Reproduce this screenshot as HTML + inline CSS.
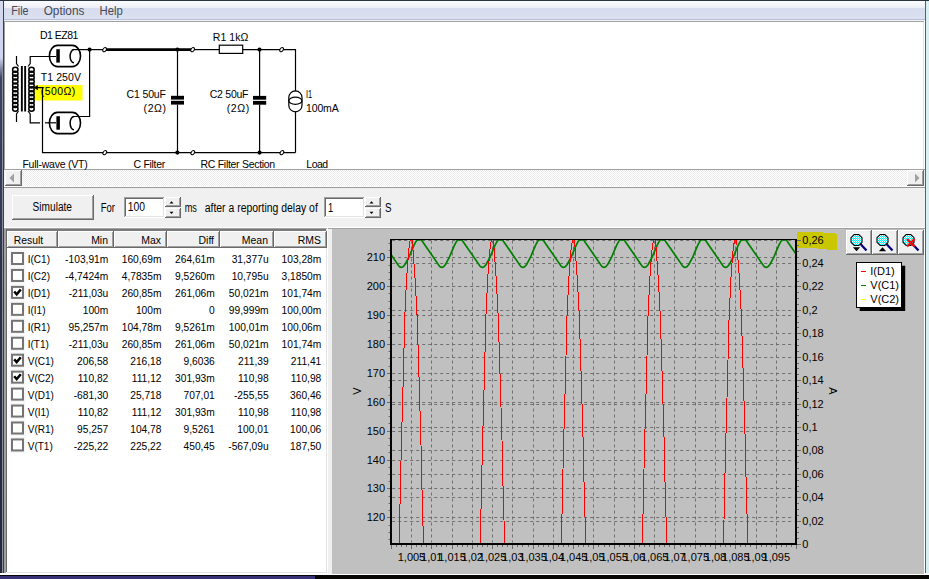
<!DOCTYPE html>
<html><head><meta charset="utf-8"><title>Rectifier Simulation</title>
<style>html,body{margin:0;padding:0;width:929px;height:579px;overflow:hidden;background:#f0f0f0}
svg text{font-family:"Liberation Sans",sans-serif}</style></head>
<body><svg width="929" height="579" viewBox="0 0 929 579" font-family="Liberation Sans, sans-serif" style="display:block"><rect x="0" y="0" width="929" height="579" fill="#f0f0f0" />
<defs><linearGradient id="lstrip" x1="0" y1="0" x2="0" y2="1"><stop offset="0" stop-color="#d6daf0"/><stop offset="0.10" stop-color="#cfd4ee"/><stop offset="0.135" stop-color="#3c4460"/><stop offset="0.5" stop-color="#2c3348"/><stop offset="1" stop-color="#252a3a"/></linearGradient><linearGradient id="menu" x1="0" y1="0" x2="0" y2="1"><stop offset="0" stop-color="#fbfcfe"/><stop offset="0.35" stop-color="#eef0f8"/><stop offset="0.4" stop-color="#d6dbee"/><stop offset="1" stop-color="#dde2f1"/></linearGradient><pattern id="dith" width="2" height="2" patternUnits="userSpaceOnUse"><rect width="2" height="2" fill="#ffffff"/><rect width="1" height="1" fill="#ebebeb"/><rect x="1" y="1" width="1" height="1" fill="#ebebeb"/></pattern><pattern id="cyan" width="2" height="2" patternUnits="userSpaceOnUse"><rect width="2" height="2" fill="#ffffff"/><rect width="1" height="1" fill="#00ffff"/><rect x="1" y="1" width="1" height="1" fill="#00ffff"/></pattern></defs>
<rect x="0" y="0" width="3" height="579" fill="url(#lstrip)" />
<rect x="2" y="70" width="1" height="509" fill="#8a8e9c" />
<rect x="3" y="0" width="1" height="579" fill="#3a3d44" />
<rect x="925" y="0" width="1" height="579" fill="#5a6068" />
<rect x="926" y="0" width="3" height="579" fill="#d8f0f4" />
<rect x="0" y="0" width="929" height="1" fill="#2a3340" />
<rect x="0" y="573" width="929" height="2" fill="#ffffff" />
<rect x="0" y="575" width="929" height="4" fill="#070605" />
<rect x="0" y="576" width="315" height="3" fill="#3a3278" />
<rect x="4" y="1" width="921" height="19" fill="url(#menu)" />
<rect x="4" y="19" width="921" height="1" fill="#b6bdd6" />
<rect x="4" y="20" width="921" height="1" fill="#f4f5fa" />
<text x="11.3" y="15" font-size="12" text-anchor="start" fill="#474a52" textLength="17.3" lengthAdjust="spacingAndGlyphs" >File</text>
<text x="43.7" y="15" font-size="12" text-anchor="start" fill="#474a52" textLength="40.7" lengthAdjust="spacingAndGlyphs" >Options</text>
<text x="99.5" y="15" font-size="12" text-anchor="start" fill="#474a52" textLength="23.3" lengthAdjust="spacingAndGlyphs" >Help</text>
<rect x="4" y="21" width="921" height="1" fill="#a0a0a0" />
<rect x="4" y="22" width="921" height="147" fill="#ffffff" />
<rect x="4" y="21" width="1" height="148" fill="#a0a0a0" />
<rect x="923" y="22" width="1" height="147" fill="#e3e3e3" />
<rect x="924" y="21" width="1" height="149" fill="#ffffff" />
<rect x="4" y="169" width="921" height="1" fill="#a0a0a0" />
<rect x="5" y="170" width="919" height="16" fill="url(#dith)" />
<rect x="5" y="170" width="17" height="16" fill="#696969" />
<rect x="5" y="170" width="16" height="15" fill="#ffffff" />
<rect x="6" y="171" width="15" height="14" fill="#a0a0a0" />
<rect x="6" y="171" width="14" height="13" fill="#f0f0f0" />
<path d="M9.5,178 L14,173.5 L14,182.5 Z" fill="#a0a0a0"/>
<rect x="907" y="170" width="17" height="16" fill="#696969" />
<rect x="907" y="170" width="16" height="15" fill="#ffffff" />
<rect x="908" y="171" width="15" height="14" fill="#a0a0a0" />
<rect x="908" y="171" width="14" height="13" fill="#f0f0f0" />
<path d="M919.5,178 L915,173.5 L915,182.5 Z" fill="#a0a0a0"/>
<rect x="4" y="186" width="921" height="1" fill="#ffffff" />
<rect x="4" y="187" width="921" height="1" fill="#9a9a9a" />
<rect x="33.5" y="85" width="49" height="15.5" fill="#ffff00" />
<g fill="none" stroke="#000" stroke-width="1.2">
<polyline points="16.5,56 16.5,63.5 18.5,66.5"/>
<polyline points="18.5,111 16.5,114 16.5,122"/>
<polyline points="28,66.5 30.2,63.5 30.2,56.5 56,56.5"/>
<polyline points="28,111 30.2,114 30.2,122.8 40,122.8"/>
<polyline points="45,122.8 56,122.8"/>
<ellipse cx="15.3" cy="69.8" rx="2.7" ry="2.5" stroke-width="1.5"/>
<ellipse cx="31.5" cy="69.8" rx="2.7" ry="2.5" stroke-width="1.5"/>
<ellipse cx="15.3" cy="73.7" rx="2.7" ry="2.5" stroke-width="1.5"/>
<ellipse cx="31.5" cy="73.7" rx="2.7" ry="2.5" stroke-width="1.5"/>
<ellipse cx="15.3" cy="77.6" rx="2.7" ry="2.5" stroke-width="1.5"/>
<ellipse cx="31.5" cy="77.6" rx="2.7" ry="2.5" stroke-width="1.5"/>
<ellipse cx="15.3" cy="81.5" rx="2.7" ry="2.5" stroke-width="1.5"/>
<ellipse cx="31.5" cy="81.5" rx="2.7" ry="2.5" stroke-width="1.5"/>
<ellipse cx="15.3" cy="85.39999999999999" rx="2.7" ry="2.5" stroke-width="1.5"/>
<ellipse cx="31.5" cy="85.39999999999999" rx="2.7" ry="2.5" stroke-width="1.5"/>
<ellipse cx="15.3" cy="89.3" rx="2.7" ry="2.5" stroke-width="1.5"/>
<ellipse cx="31.5" cy="89.3" rx="2.7" ry="2.5" stroke-width="1.5"/>
<ellipse cx="15.3" cy="93.19999999999999" rx="2.7" ry="2.5" stroke-width="1.5"/>
<ellipse cx="31.5" cy="93.19999999999999" rx="2.7" ry="2.5" stroke-width="1.5"/>
<ellipse cx="15.3" cy="97.1" rx="2.7" ry="2.5" stroke-width="1.5"/>
<ellipse cx="31.5" cy="97.1" rx="2.7" ry="2.5" stroke-width="1.5"/>
<ellipse cx="15.3" cy="101.0" rx="2.7" ry="2.5" stroke-width="1.5"/>
<ellipse cx="31.5" cy="101.0" rx="2.7" ry="2.5" stroke-width="1.5"/>
<ellipse cx="15.3" cy="104.9" rx="2.7" ry="2.5" stroke-width="1.5"/>
<ellipse cx="31.5" cy="104.9" rx="2.7" ry="2.5" stroke-width="1.5"/>
<ellipse cx="15.3" cy="108.8" rx="2.7" ry="2.5" stroke-width="1.5"/>
<ellipse cx="31.5" cy="108.8" rx="2.7" ry="2.5" stroke-width="1.5"/>
</g>
<rect x="20.9" y="66" width="1.9" height="45.5" fill="#000" />
<rect x="24.2" y="66" width="1.9" height="45.5" fill="#000" />
<g fill="none" stroke="#000" stroke-width="1.2">
<polyline points="37,87.6 42.5,87.6 42.5,152.6 295.5,152.6"/>
</g>
<path d="M33.6,87.6 L37.8,84.9 L37.8,90.3 Z" fill="#000"/>
<g fill="none" stroke="#000" stroke-width="1.6">
<path d="M57.5,45.4 L72.4,45.4 A8.1,10.6 0 0 1 72.4,66.6 L57.5,66.6 A8.1,10.6 0 0 1 57.5,45.4 Z"/>
<path d="M57.5,112.4 L72.4,112.4 A8.1,10.6 0 0 1 72.4,133.6 L57.5,133.6 A8.1,10.6 0 0 1 57.5,112.4 Z"/>
</g>
<rect x="56.3" y="49.2" width="3.5" height="13.4" fill="#000" />
<rect x="56.4" y="116.2" width="3.5" height="13.5" fill="#000" />
<g fill="none" stroke="#000" stroke-width="1.2">
<path d="M74,49.6 A3.9,6.6 0 0 0 74,62.8" stroke-width="1.5"/>
<path d="M74,116.5 A3.9,6.6 0 0 0 74,129.7" stroke-width="1.5"/>
<polyline points="73.3,49.6 104.5,49.6"/>
<polyline points="73.3,116.5 89.6,116.5 89.6,49.6"/>
<polyline points="192.6,49.6 219,49.6"/>
<polyline points="243,49.6 295.5,49.6 295.5,91.3"/>
<polyline points="295.5,111.5 295.5,152.6"/>
<polyline points="177.5,49.6 177.5,96"/>
<polyline points="177.5,104.6 177.5,152.6"/>
<polyline points="259.6,49.6 259.6,96"/>
<polyline points="259.6,104.6 259.6,152.6"/>
<rect x="219.3" y="45.2" width="23.4" height="8.2"/>
<path d="M288.8,97.5 A6.6,6.6 0 0 1 302,97.5 L302,105.2 A6.6,6.6 0 0 1 288.8,105.2 Z"/>
<ellipse cx="295.4" cy="100.8" rx="6.6" ry="3.6"/>
</g>
<line x1="104.5" y1="49.6" x2="192.6" y2="49.6" stroke="#000" stroke-width="2.6" />
<rect x="171" y="95.8" width="13" height="3.8" fill="#000" />
<rect x="171" y="100.8" width="13" height="3.8" fill="#000" />
<rect x="253" y="95.9" width="13.2" height="3.8" fill="#000" />
<rect x="253" y="100.9" width="13.2" height="3.8" fill="#000" />
<circle cx="89.6" cy="49.6" r="2.1" fill="#000"/>
<circle cx="177.4" cy="49.6" r="2.1" fill="#000"/>
<circle cx="259.5" cy="49.6" r="2.1" fill="#000"/>
<circle cx="177.4" cy="152.6" r="2.1" fill="#000"/>
<circle cx="259.6" cy="152.6" r="2.1" fill="#000"/>
<ellipse cx="104.6" cy="49.6" rx="1.6" ry="2.3" transform="rotate(35 104.6 49.6)" fill="#fff" stroke="#000" stroke-width="1"/>
<ellipse cx="104.8" cy="152.6" rx="1.6" ry="2.3" transform="rotate(35 104.8 152.6)" fill="#fff" stroke="#000" stroke-width="1"/>
<ellipse cx="192.6" cy="49.6" rx="1.6" ry="2.3" transform="rotate(35 192.6 49.6)" fill="#fff" stroke="#000" stroke-width="1"/>
<ellipse cx="192.8" cy="152.6" rx="1.6" ry="2.3" transform="rotate(35 192.8 152.6)" fill="#fff" stroke="#000" stroke-width="1"/>
<ellipse cx="281.6" cy="49.6" rx="1.6" ry="2.3" transform="rotate(35 281.6 49.6)" fill="#fff" stroke="#000" stroke-width="1"/>
<ellipse cx="281.9" cy="152.6" rx="1.6" ry="2.3" transform="rotate(35 281.9 152.6)" fill="#fff" stroke="#000" stroke-width="1"/>
<text x="39.9" y="39" font-size="10.5" text-anchor="start" fill="#000" textLength="38.5" lengthAdjust="spacing" >D1 EZ81</text>
<text x="40.8" y="81" font-size="10.5" text-anchor="start" fill="#000" textLength="40.1" lengthAdjust="spacing" >T1 250V</text>
<text x="40.8" y="95.3" font-size="10.5" text-anchor="start" fill="#000" textLength="34.5" lengthAdjust="spacing" >(500Ω)</text>
<text x="212.8" y="41.3" font-size="10.5" text-anchor="start" fill="#000" textLength="35.5" lengthAdjust="spacing" >R1 1kΩ</text>
<text x="126.6" y="98" font-size="10.5" text-anchor="start" fill="#000" textLength="39.3" lengthAdjust="spacing" >C1 50uF</text>
<text x="143.6" y="111.5" font-size="10.5" text-anchor="start" fill="#000" textLength="22.3" lengthAdjust="spacing" >(2Ω)</text>
<text x="209.7" y="98" font-size="10.5" text-anchor="start" fill="#000" textLength="38.8" lengthAdjust="spacing" >C2 50uF</text>
<text x="226.7" y="111.5" font-size="10.5" text-anchor="start" fill="#000" textLength="22.6" lengthAdjust="spacing" >(2Ω)</text>
<text x="306" y="97.6" font-size="10.5" text-anchor="start" fill="#000" textLength="6.2" lengthAdjust="spacingAndGlyphs" >I1</text>
<text x="306" y="112" font-size="10.5" text-anchor="start" fill="#000" textLength="32.7" lengthAdjust="spacing" >100mA</text>
<text x="22.4" y="168" font-size="10.5" text-anchor="start" fill="#000" textLength="65.4" lengthAdjust="spacing" >Full-wave (VT)</text>
<text x="133.5" y="168" font-size="10.5" text-anchor="start" fill="#000" textLength="31.7" lengthAdjust="spacing" >C Filter</text>
<text x="200.5" y="168" font-size="10.5" text-anchor="start" fill="#000" textLength="74.7" lengthAdjust="spacing" >RC Filter Section</text>
<text x="306.3" y="168" font-size="10.5" text-anchor="start" fill="#000" textLength="21.9" lengthAdjust="spacing" >Load</text>
<rect x="12" y="195" width="82" height="25" fill="#696969" />
<rect x="12" y="195" width="81" height="24" fill="#ffffff" />
<rect x="13" y="196" width="80" height="23" fill="#a0a0a0" />
<rect x="13" y="196" width="79" height="22" fill="#f0f0f0" />
<text x="32.6" y="211.1" font-size="12" text-anchor="start" fill="#000" textLength="39.4" lengthAdjust="spacingAndGlyphs" >Simulate</text>
<text x="100.7" y="211.7" font-size="12" text-anchor="start" fill="#000" textLength="14.2" lengthAdjust="spacingAndGlyphs" >For</text>
<rect x="124" y="197" width="41" height="21" fill="#ffffff" />
<rect x="124" y="197" width="40" height="20" fill="#a0a0a0" />
<rect x="125" y="198" width="39" height="19" fill="#e3e3e3" />
<rect x="125" y="198" width="38" height="18" fill="#696969" />
<rect x="126" y="199" width="37" height="17" fill="#ffffff" />
<text x="127.8" y="211.2" font-size="12" text-anchor="start" fill="#000" textLength="17.3" lengthAdjust="spacingAndGlyphs" >100</text>
<rect x="165" y="197" width="16" height="10" fill="#696969" />
<rect x="165" y="197" width="15" height="9" fill="#ffffff" />
<rect x="166" y="198" width="14" height="8" fill="#a0a0a0" />
<rect x="166" y="198" width="13" height="7" fill="#f0f0f0" />
<rect x="165" y="208" width="16" height="10" fill="#696969" />
<rect x="165" y="208" width="15" height="9" fill="#ffffff" />
<rect x="166" y="209" width="14" height="8" fill="#a0a0a0" />
<rect x="166" y="209" width="13" height="7" fill="#f0f0f0" />
<path d="M169.5,203.5 L173.5,203.5 L171.5,201.3 Z" fill="#000"/>
<path d="M169.5,211.8 L173.5,211.8 L171.5,214 Z" fill="#000"/>
<text x="184.7" y="211.7" font-size="12" text-anchor="start" fill="#000" textLength="12.2" lengthAdjust="spacingAndGlyphs" >ms</text>
<text x="204.7" y="211.7" font-size="12" text-anchor="start" fill="#000" textLength="113.1" lengthAdjust="spacingAndGlyphs" >after a reporting delay of</text>
<rect x="324" y="197" width="41" height="21" fill="#ffffff" />
<rect x="324" y="197" width="40" height="20" fill="#a0a0a0" />
<rect x="325" y="198" width="39" height="19" fill="#e3e3e3" />
<rect x="325" y="198" width="38" height="18" fill="#696969" />
<rect x="326" y="199" width="37" height="17" fill="#ffffff" />
<text x="328" y="211.7" font-size="12" text-anchor="start" fill="#000" textLength="5.2" lengthAdjust="spacingAndGlyphs" >1</text>
<rect x="365" y="197" width="16" height="10" fill="#696969" />
<rect x="365" y="197" width="15" height="9" fill="#ffffff" />
<rect x="366" y="198" width="14" height="8" fill="#a0a0a0" />
<rect x="366" y="198" width="13" height="7" fill="#f0f0f0" />
<rect x="365" y="208" width="16" height="10" fill="#696969" />
<rect x="365" y="208" width="15" height="9" fill="#ffffff" />
<rect x="366" y="209" width="14" height="8" fill="#a0a0a0" />
<rect x="366" y="209" width="13" height="7" fill="#f0f0f0" />
<path d="M369.5,203.5 L373.5,203.5 L371.5,201.3 Z" fill="#000"/>
<path d="M369.5,211.8 L373.5,211.8 L371.5,214 Z" fill="#000"/>
<text x="385" y="211.7" font-size="12" text-anchor="start" fill="#000" textLength="6.5" lengthAdjust="spacingAndGlyphs" >S</text>
<rect x="4" y="227" width="921" height="1" fill="#ffffff" />
<rect x="4" y="228" width="921" height="1" fill="#a0a0a0" />
<rect x="4" y="228" width="324" height="346" fill="#ffffff" />
<rect x="4" y="228" width="323" height="1" fill="#a0a0a0" />
<rect x="4" y="229" width="322" height="2" fill="#7a7a7a" />
<rect x="4" y="228" width="2" height="345" fill="#a0a0a0" />
<rect x="6" y="229" width="1" height="343" fill="#696969" />
<rect x="7" y="572" width="320" height="1" fill="#e3e3e3" />
<rect x="327" y="229" width="1" height="344" fill="#ffffff" />
<rect x="326" y="230" width="1" height="342" fill="#e3e3e3" />
<rect x="7" y="231" width="51" height="17" fill="#696969" />
<rect x="7" y="231" width="50" height="16" fill="#ffffff" />
<rect x="8" y="232" width="49" height="15" fill="#a0a0a0" />
<rect x="8" y="232" width="48" height="14" fill="#f0f0f0" />
<rect x="58" y="231" width="56" height="17" fill="#696969" />
<rect x="58" y="231" width="55" height="16" fill="#ffffff" />
<rect x="59" y="232" width="54" height="15" fill="#a0a0a0" />
<rect x="59" y="232" width="53" height="14" fill="#f0f0f0" />
<rect x="114" y="231" width="53" height="17" fill="#696969" />
<rect x="114" y="231" width="52" height="16" fill="#ffffff" />
<rect x="115" y="232" width="51" height="15" fill="#a0a0a0" />
<rect x="115" y="232" width="50" height="14" fill="#f0f0f0" />
<rect x="167" y="231" width="53" height="17" fill="#696969" />
<rect x="167" y="231" width="52" height="16" fill="#ffffff" />
<rect x="168" y="232" width="51" height="15" fill="#a0a0a0" />
<rect x="168" y="232" width="50" height="14" fill="#f0f0f0" />
<rect x="220" y="231" width="54" height="17" fill="#696969" />
<rect x="220" y="231" width="53" height="16" fill="#ffffff" />
<rect x="221" y="232" width="52" height="15" fill="#a0a0a0" />
<rect x="221" y="232" width="51" height="14" fill="#f0f0f0" />
<rect x="274" y="231" width="53" height="17" fill="#696969" />
<rect x="274" y="231" width="52" height="16" fill="#ffffff" />
<rect x="275" y="232" width="51" height="15" fill="#a0a0a0" />
<rect x="275" y="232" width="50" height="14" fill="#f0f0f0" />
<text x="13.8" y="243.9" font-size="11.5" text-anchor="start" fill="#000" textLength="29.4" lengthAdjust="spacingAndGlyphs" >Result</text>
<text transform="translate(108.00,243.90) scale(0.91,1)" x="0" y="0" font-size="11.5" text-anchor="end" fill="#000" >Min</text>
<text transform="translate(161.00,243.90) scale(0.91,1)" x="0" y="0" font-size="11.5" text-anchor="end" fill="#000" >Max</text>
<text transform="translate(214.00,243.90) scale(0.91,1)" x="0" y="0" font-size="11.5" text-anchor="end" fill="#000" >Diff</text>
<text transform="translate(268.00,243.90) scale(0.91,1)" x="0" y="0" font-size="11.5" text-anchor="end" fill="#000" >Mean</text>
<text transform="translate(321.00,243.90) scale(0.91,1)" x="0" y="0" font-size="11.5" text-anchor="end" fill="#000" >RMS</text>
<rect x="9.5" y="250.5" width="16" height="16" fill="#f5f5f5" />
<rect x="11" y="252.0" width="13" height="13" fill="#747474" />
<rect x="13" y="254.0" width="9" height="9" fill="#ffffff" />
<text transform="translate(27.70,263.20) scale(0.85,1)" x="0" y="0" font-size="11.8" text-anchor="start" fill="#000" >I(C1)</text>
<text transform="translate(108.30,263.20) scale(0.867,1)" x="0" y="0" font-size="11.8" text-anchor="end" fill="#000" >-103,91m</text>
<text transform="translate(161.50,263.20) scale(0.867,1)" x="0" y="0" font-size="11.8" text-anchor="end" fill="#000" >160,69m</text>
<text transform="translate(214.80,263.20) scale(0.867,1)" x="0" y="0" font-size="11.8" text-anchor="end" fill="#000" >264,61m</text>
<text transform="translate(268.60,263.20) scale(0.867,1)" x="0" y="0" font-size="11.8" text-anchor="end" fill="#000" >31,377u</text>
<text transform="translate(321.30,263.20) scale(0.867,1)" x="0" y="0" font-size="11.8" text-anchor="end" fill="#000" >103,28m</text>
<rect x="9.5" y="267.45" width="16" height="16" fill="#f5f5f5" />
<rect x="11" y="268.95" width="13" height="13" fill="#747474" />
<rect x="13" y="270.95" width="9" height="9" fill="#ffffff" />
<text transform="translate(27.70,280.15) scale(0.85,1)" x="0" y="0" font-size="11.8" text-anchor="start" fill="#000" >I(C2)</text>
<text transform="translate(108.30,280.15) scale(0.867,1)" x="0" y="0" font-size="11.8" text-anchor="end" fill="#000" >-4,7424m</text>
<text transform="translate(161.50,280.15) scale(0.867,1)" x="0" y="0" font-size="11.8" text-anchor="end" fill="#000" >4,7835m</text>
<text transform="translate(214.80,280.15) scale(0.867,1)" x="0" y="0" font-size="11.8" text-anchor="end" fill="#000" >9,5260m</text>
<text transform="translate(268.60,280.15) scale(0.867,1)" x="0" y="0" font-size="11.8" text-anchor="end" fill="#000" >10,795u</text>
<text transform="translate(321.30,280.15) scale(0.867,1)" x="0" y="0" font-size="11.8" text-anchor="end" fill="#000" >3,1850m</text>
<rect x="9.5" y="284.4" width="16" height="16" fill="#f5f5f5" />
<rect x="11" y="285.9" width="13" height="13" fill="#747474" />
<rect x="13" y="287.9" width="9" height="9" fill="#ffffff" />
<path d="M14.2,291.5 L16.7,294.29999999999995 L20.8,289.5" fill="none" stroke="#000" stroke-width="2.5"/>
<text transform="translate(27.70,297.10) scale(0.85,1)" x="0" y="0" font-size="11.8" text-anchor="start" fill="#000" >I(D1)</text>
<text transform="translate(108.30,297.10) scale(0.867,1)" x="0" y="0" font-size="11.8" text-anchor="end" fill="#000" >-211,03u</text>
<text transform="translate(161.50,297.10) scale(0.867,1)" x="0" y="0" font-size="11.8" text-anchor="end" fill="#000" >260,85m</text>
<text transform="translate(214.80,297.10) scale(0.867,1)" x="0" y="0" font-size="11.8" text-anchor="end" fill="#000" >261,06m</text>
<text transform="translate(268.60,297.10) scale(0.867,1)" x="0" y="0" font-size="11.8" text-anchor="end" fill="#000" >50,021m</text>
<text transform="translate(321.30,297.10) scale(0.867,1)" x="0" y="0" font-size="11.8" text-anchor="end" fill="#000" >101,74m</text>
<rect x="9.5" y="301.35" width="16" height="16" fill="#f5f5f5" />
<rect x="11" y="302.85" width="13" height="13" fill="#747474" />
<rect x="13" y="304.85" width="9" height="9" fill="#ffffff" />
<text transform="translate(27.70,314.05) scale(0.85,1)" x="0" y="0" font-size="11.8" text-anchor="start" fill="#000" >I(I1)</text>
<text transform="translate(108.30,314.05) scale(0.867,1)" x="0" y="0" font-size="11.8" text-anchor="end" fill="#000" >100m</text>
<text transform="translate(161.50,314.05) scale(0.867,1)" x="0" y="0" font-size="11.8" text-anchor="end" fill="#000" >100m</text>
<text transform="translate(214.80,314.05) scale(0.867,1)" x="0" y="0" font-size="11.8" text-anchor="end" fill="#000" >0</text>
<text transform="translate(268.60,314.05) scale(0.867,1)" x="0" y="0" font-size="11.8" text-anchor="end" fill="#000" >99,999m</text>
<text transform="translate(321.30,314.05) scale(0.867,1)" x="0" y="0" font-size="11.8" text-anchor="end" fill="#000" >100,00m</text>
<rect x="9.5" y="318.3" width="16" height="16" fill="#f5f5f5" />
<rect x="11" y="319.8" width="13" height="13" fill="#747474" />
<rect x="13" y="321.8" width="9" height="9" fill="#ffffff" />
<text transform="translate(27.70,331.00) scale(0.85,1)" x="0" y="0" font-size="11.8" text-anchor="start" fill="#000" >I(R1)</text>
<text transform="translate(108.30,331.00) scale(0.867,1)" x="0" y="0" font-size="11.8" text-anchor="end" fill="#000" >95,257m</text>
<text transform="translate(161.50,331.00) scale(0.867,1)" x="0" y="0" font-size="11.8" text-anchor="end" fill="#000" >104,78m</text>
<text transform="translate(214.80,331.00) scale(0.867,1)" x="0" y="0" font-size="11.8" text-anchor="end" fill="#000" >9,5261m</text>
<text transform="translate(268.60,331.00) scale(0.867,1)" x="0" y="0" font-size="11.8" text-anchor="end" fill="#000" >100,01m</text>
<text transform="translate(321.30,331.00) scale(0.867,1)" x="0" y="0" font-size="11.8" text-anchor="end" fill="#000" >100,06m</text>
<rect x="9.5" y="335.25" width="16" height="16" fill="#f5f5f5" />
<rect x="11" y="336.75" width="13" height="13" fill="#747474" />
<rect x="13" y="338.75" width="9" height="9" fill="#ffffff" />
<text transform="translate(27.70,347.95) scale(0.85,1)" x="0" y="0" font-size="11.8" text-anchor="start" fill="#000" >I(T1)</text>
<text transform="translate(108.30,347.95) scale(0.867,1)" x="0" y="0" font-size="11.8" text-anchor="end" fill="#000" >-211,03u</text>
<text transform="translate(161.50,347.95) scale(0.867,1)" x="0" y="0" font-size="11.8" text-anchor="end" fill="#000" >260,85m</text>
<text transform="translate(214.80,347.95) scale(0.867,1)" x="0" y="0" font-size="11.8" text-anchor="end" fill="#000" >261,06m</text>
<text transform="translate(268.60,347.95) scale(0.867,1)" x="0" y="0" font-size="11.8" text-anchor="end" fill="#000" >50,021m</text>
<text transform="translate(321.30,347.95) scale(0.867,1)" x="0" y="0" font-size="11.8" text-anchor="end" fill="#000" >101,74m</text>
<rect x="9.5" y="352.2" width="16" height="16" fill="#f5f5f5" />
<rect x="11" y="353.7" width="13" height="13" fill="#747474" />
<rect x="13" y="355.7" width="9" height="9" fill="#ffffff" />
<path d="M14.2,359.3 L16.7,362.09999999999997 L20.8,357.3" fill="none" stroke="#000" stroke-width="2.5"/>
<text transform="translate(27.70,364.90) scale(0.85,1)" x="0" y="0" font-size="11.8" text-anchor="start" fill="#000" >V(C1)</text>
<text transform="translate(108.30,364.90) scale(0.867,1)" x="0" y="0" font-size="11.8" text-anchor="end" fill="#000" >206,58</text>
<text transform="translate(161.50,364.90) scale(0.867,1)" x="0" y="0" font-size="11.8" text-anchor="end" fill="#000" >216,18</text>
<text transform="translate(214.80,364.90) scale(0.867,1)" x="0" y="0" font-size="11.8" text-anchor="end" fill="#000" >9,6036</text>
<text transform="translate(268.60,364.90) scale(0.867,1)" x="0" y="0" font-size="11.8" text-anchor="end" fill="#000" >211,39</text>
<text transform="translate(321.30,364.90) scale(0.867,1)" x="0" y="0" font-size="11.8" text-anchor="end" fill="#000" >211,41</text>
<rect x="9.5" y="369.15" width="16" height="16" fill="#f5f5f5" />
<rect x="11" y="370.65" width="13" height="13" fill="#747474" />
<rect x="13" y="372.65" width="9" height="9" fill="#ffffff" />
<path d="M14.2,376.25 L16.7,379.04999999999995 L20.8,374.25" fill="none" stroke="#000" stroke-width="2.5"/>
<text transform="translate(27.70,381.85) scale(0.85,1)" x="0" y="0" font-size="11.8" text-anchor="start" fill="#000" >V(C2)</text>
<text transform="translate(108.30,381.85) scale(0.867,1)" x="0" y="0" font-size="11.8" text-anchor="end" fill="#000" >110,82</text>
<text transform="translate(161.50,381.85) scale(0.867,1)" x="0" y="0" font-size="11.8" text-anchor="end" fill="#000" >111,12</text>
<text transform="translate(214.80,381.85) scale(0.867,1)" x="0" y="0" font-size="11.8" text-anchor="end" fill="#000" >301,93m</text>
<text transform="translate(268.60,381.85) scale(0.867,1)" x="0" y="0" font-size="11.8" text-anchor="end" fill="#000" >110,98</text>
<text transform="translate(321.30,381.85) scale(0.867,1)" x="0" y="0" font-size="11.8" text-anchor="end" fill="#000" >110,98</text>
<rect x="9.5" y="386.1" width="16" height="16" fill="#f5f5f5" />
<rect x="11" y="387.6" width="13" height="13" fill="#747474" />
<rect x="13" y="389.6" width="9" height="9" fill="#ffffff" />
<text transform="translate(27.70,398.80) scale(0.85,1)" x="0" y="0" font-size="11.8" text-anchor="start" fill="#000" >V(D1)</text>
<text transform="translate(108.30,398.80) scale(0.867,1)" x="0" y="0" font-size="11.8" text-anchor="end" fill="#000" >-681,30</text>
<text transform="translate(161.50,398.80) scale(0.867,1)" x="0" y="0" font-size="11.8" text-anchor="end" fill="#000" >25,718</text>
<text transform="translate(214.80,398.80) scale(0.867,1)" x="0" y="0" font-size="11.8" text-anchor="end" fill="#000" >707,01</text>
<text transform="translate(268.60,398.80) scale(0.867,1)" x="0" y="0" font-size="11.8" text-anchor="end" fill="#000" >-255,55</text>
<text transform="translate(321.30,398.80) scale(0.867,1)" x="0" y="0" font-size="11.8" text-anchor="end" fill="#000" >360,46</text>
<rect x="9.5" y="403.04999999999995" width="16" height="16" fill="#f5f5f5" />
<rect x="11" y="404.54999999999995" width="13" height="13" fill="#747474" />
<rect x="13" y="406.54999999999995" width="9" height="9" fill="#ffffff" />
<text transform="translate(27.70,415.75) scale(0.85,1)" x="0" y="0" font-size="11.8" text-anchor="start" fill="#000" >V(I1)</text>
<text transform="translate(108.30,415.75) scale(0.867,1)" x="0" y="0" font-size="11.8" text-anchor="end" fill="#000" >110,82</text>
<text transform="translate(161.50,415.75) scale(0.867,1)" x="0" y="0" font-size="11.8" text-anchor="end" fill="#000" >111,12</text>
<text transform="translate(214.80,415.75) scale(0.867,1)" x="0" y="0" font-size="11.8" text-anchor="end" fill="#000" >301,93m</text>
<text transform="translate(268.60,415.75) scale(0.867,1)" x="0" y="0" font-size="11.8" text-anchor="end" fill="#000" >110,98</text>
<text transform="translate(321.30,415.75) scale(0.867,1)" x="0" y="0" font-size="11.8" text-anchor="end" fill="#000" >110,98</text>
<rect x="9.5" y="420.0" width="16" height="16" fill="#f5f5f5" />
<rect x="11" y="421.5" width="13" height="13" fill="#747474" />
<rect x="13" y="423.5" width="9" height="9" fill="#ffffff" />
<text transform="translate(27.70,432.70) scale(0.85,1)" x="0" y="0" font-size="11.8" text-anchor="start" fill="#000" >V(R1)</text>
<text transform="translate(108.30,432.70) scale(0.867,1)" x="0" y="0" font-size="11.8" text-anchor="end" fill="#000" >95,257</text>
<text transform="translate(161.50,432.70) scale(0.867,1)" x="0" y="0" font-size="11.8" text-anchor="end" fill="#000" >104,78</text>
<text transform="translate(214.80,432.70) scale(0.867,1)" x="0" y="0" font-size="11.8" text-anchor="end" fill="#000" >9,5261</text>
<text transform="translate(268.60,432.70) scale(0.867,1)" x="0" y="0" font-size="11.8" text-anchor="end" fill="#000" >100,01</text>
<text transform="translate(321.30,432.70) scale(0.867,1)" x="0" y="0" font-size="11.8" text-anchor="end" fill="#000" >100,06</text>
<rect x="9.5" y="436.95" width="16" height="16" fill="#f5f5f5" />
<rect x="11" y="438.45" width="13" height="13" fill="#747474" />
<rect x="13" y="440.45" width="9" height="9" fill="#ffffff" />
<text transform="translate(27.70,449.65) scale(0.85,1)" x="0" y="0" font-size="11.8" text-anchor="start" fill="#000" >V(T1)</text>
<text transform="translate(108.30,449.65) scale(0.867,1)" x="0" y="0" font-size="11.8" text-anchor="end" fill="#000" >-225,22</text>
<text transform="translate(161.50,449.65) scale(0.867,1)" x="0" y="0" font-size="11.8" text-anchor="end" fill="#000" >225,22</text>
<text transform="translate(214.80,449.65) scale(0.867,1)" x="0" y="0" font-size="11.8" text-anchor="end" fill="#000" >450,45</text>
<text transform="translate(268.60,449.65) scale(0.867,1)" x="0" y="0" font-size="11.8" text-anchor="end" fill="#000" >-567,09u</text>
<text transform="translate(321.30,449.65) scale(0.867,1)" x="0" y="0" font-size="11.8" text-anchor="end" fill="#000" >187,50</text>
<rect x="328" y="229" width="4" height="345" fill="#f0f0f0" />
<rect x="332" y="229" width="593" height="345" fill="#c0c0c0" />
<rect x="924" y="229" width="1" height="345" fill="#ffffff" />
<polygon points="797,232 823,232 823,233 835,233 835,234 837,234 837,250 827,250 827,249 817,249 817,248 797,248" fill="#cac600"/>
<g stroke="#707070" stroke-width="1" stroke-dasharray="3,3">
<line x1="411.5" y1="240.5" x2="411.5" y2="542.5"/>
<line x1="431.5" y1="240.5" x2="431.5" y2="542.5"/>
<line x1="452.5" y1="240.5" x2="452.5" y2="542.5"/>
<line x1="472.5" y1="240.5" x2="472.5" y2="542.5"/>
<line x1="492.5" y1="240.5" x2="492.5" y2="542.5"/>
<line x1="512.5" y1="240.5" x2="512.5" y2="542.5"/>
<line x1="533.5" y1="240.5" x2="533.5" y2="542.5"/>
<line x1="553.5" y1="240.5" x2="553.5" y2="542.5"/>
<line x1="573.5" y1="240.5" x2="573.5" y2="542.5"/>
<line x1="593.5" y1="240.5" x2="593.5" y2="542.5"/>
<line x1="614.5" y1="240.5" x2="614.5" y2="542.5"/>
<line x1="634.5" y1="240.5" x2="634.5" y2="542.5"/>
<line x1="654.5" y1="240.5" x2="654.5" y2="542.5"/>
<line x1="674.5" y1="240.5" x2="674.5" y2="542.5"/>
<line x1="695.5" y1="240.5" x2="695.5" y2="542.5"/>
<line x1="715.5" y1="240.5" x2="715.5" y2="542.5"/>
<line x1="735.5" y1="240.5" x2="735.5" y2="542.5"/>
<line x1="756.5" y1="240.5" x2="756.5" y2="542.5"/>
<line x1="776.5" y1="240.5" x2="776.5" y2="542.5"/>
<line x1="392.2" y1="517.5" x2="794.5" y2="517.5"/>
<line x1="392.2" y1="488.5" x2="794.5" y2="488.5"/>
<line x1="392.2" y1="460.5" x2="794.5" y2="460.5"/>
<line x1="392.2" y1="431.5" x2="794.5" y2="431.5"/>
<line x1="392.2" y1="402.5" x2="794.5" y2="402.5"/>
<line x1="392.2" y1="373.5" x2="794.5" y2="373.5"/>
<line x1="392.2" y1="344.5" x2="794.5" y2="344.5"/>
<line x1="392.2" y1="315.5" x2="794.5" y2="315.5"/>
<line x1="392.2" y1="286.5" x2="794.5" y2="286.5"/>
<line x1="392.2" y1="257.5" x2="794.5" y2="257.5"/>
<line x1="392.2" y1="521.5" x2="794.5" y2="521.5"/>
<line x1="392.2" y1="497.5" x2="794.5" y2="497.5"/>
<line x1="392.2" y1="474.5" x2="794.5" y2="474.5"/>
<line x1="392.2" y1="450.5" x2="794.5" y2="450.5"/>
<line x1="392.2" y1="427.5" x2="794.5" y2="427.5"/>
<line x1="392.2" y1="404.5" x2="794.5" y2="404.5"/>
<line x1="392.2" y1="380.5" x2="794.5" y2="380.5"/>
<line x1="392.2" y1="357.5" x2="794.5" y2="357.5"/>
<line x1="392.2" y1="333.5" x2="794.5" y2="333.5"/>
<line x1="392.2" y1="310.5" x2="794.5" y2="310.5"/>
<line x1="392.2" y1="286.5" x2="794.5" y2="286.5"/>
<line x1="392.2" y1="263.5" x2="794.5" y2="263.5"/>
<line x1="392.2" y1="240.5" x2="794.5" y2="240.5"/>
</g>
<g stroke="#6a6a6a" stroke-width="1">
<line x1="387" y1="517.5" x2="390" y2="517.5"/>
<line x1="387" y1="488.5" x2="390" y2="488.5"/>
<line x1="387" y1="460.5" x2="390" y2="460.5"/>
<line x1="387" y1="431.5" x2="390" y2="431.5"/>
<line x1="387" y1="402.5" x2="390" y2="402.5"/>
<line x1="387" y1="373.5" x2="390" y2="373.5"/>
<line x1="387" y1="344.5" x2="390" y2="344.5"/>
<line x1="387" y1="315.5" x2="390" y2="315.5"/>
<line x1="387" y1="286.5" x2="390" y2="286.5"/>
<line x1="387" y1="257.5" x2="390" y2="257.5"/>
<line x1="388.5" y1="539.5" x2="390" y2="539.5"/>
<line x1="388.5" y1="532.5" x2="390" y2="532.5"/>
<line x1="388.5" y1="525.5" x2="390" y2="525.5"/>
<line x1="388.5" y1="510.5" x2="390" y2="510.5"/>
<line x1="388.5" y1="503.5" x2="390" y2="503.5"/>
<line x1="388.5" y1="496.5" x2="390" y2="496.5"/>
<line x1="388.5" y1="481.5" x2="390" y2="481.5"/>
<line x1="388.5" y1="474.5" x2="390" y2="474.5"/>
<line x1="388.5" y1="467.5" x2="390" y2="467.5"/>
<line x1="388.5" y1="452.5" x2="390" y2="452.5"/>
<line x1="388.5" y1="445.5" x2="390" y2="445.5"/>
<line x1="388.5" y1="438.5" x2="390" y2="438.5"/>
<line x1="388.5" y1="423.5" x2="390" y2="423.5"/>
<line x1="388.5" y1="416.5" x2="390" y2="416.5"/>
<line x1="388.5" y1="409.5" x2="390" y2="409.5"/>
<line x1="388.5" y1="395.5" x2="390" y2="395.5"/>
<line x1="388.5" y1="387.5" x2="390" y2="387.5"/>
<line x1="388.5" y1="380.5" x2="390" y2="380.5"/>
<line x1="388.5" y1="366.5" x2="390" y2="366.5"/>
<line x1="388.5" y1="358.5" x2="390" y2="358.5"/>
<line x1="388.5" y1="351.5" x2="390" y2="351.5"/>
<line x1="388.5" y1="337.5" x2="390" y2="337.5"/>
<line x1="388.5" y1="330.5" x2="390" y2="330.5"/>
<line x1="388.5" y1="322.5" x2="390" y2="322.5"/>
<line x1="388.5" y1="308.5" x2="390" y2="308.5"/>
<line x1="388.5" y1="301.5" x2="390" y2="301.5"/>
<line x1="388.5" y1="293.5" x2="390" y2="293.5"/>
<line x1="388.5" y1="279.5" x2="390" y2="279.5"/>
<line x1="388.5" y1="272.5" x2="390" y2="272.5"/>
<line x1="388.5" y1="265.5" x2="390" y2="265.5"/>
<line x1="388.5" y1="250.5" x2="390" y2="250.5"/>
<line x1="388.5" y1="243.5" x2="390" y2="243.5"/>
<line x1="797" y1="544.5" x2="801" y2="544.5"/>
<line x1="797" y1="521.5" x2="801" y2="521.5"/>
<line x1="797" y1="497.5" x2="801" y2="497.5"/>
<line x1="797" y1="474.5" x2="801" y2="474.5"/>
<line x1="797" y1="450.5" x2="801" y2="450.5"/>
<line x1="797" y1="427.5" x2="801" y2="427.5"/>
<line x1="797" y1="404.5" x2="801" y2="404.5"/>
<line x1="797" y1="380.5" x2="801" y2="380.5"/>
<line x1="797" y1="357.5" x2="801" y2="357.5"/>
<line x1="797" y1="333.5" x2="801" y2="333.5"/>
<line x1="797" y1="310.5" x2="801" y2="310.5"/>
<line x1="797" y1="286.5" x2="801" y2="286.5"/>
<line x1="797" y1="263.5" x2="801" y2="263.5"/>
<line x1="797" y1="240.5" x2="801" y2="240.5"/>
<line x1="797" y1="538.5" x2="799" y2="538.5"/>
<line x1="797" y1="532.5" x2="799" y2="532.5"/>
<line x1="797" y1="527.5" x2="799" y2="527.5"/>
<line x1="797" y1="515.5" x2="799" y2="515.5"/>
<line x1="797" y1="509.5" x2="799" y2="509.5"/>
<line x1="797" y1="503.5" x2="799" y2="503.5"/>
<line x1="797" y1="491.5" x2="799" y2="491.5"/>
<line x1="797" y1="486.5" x2="799" y2="486.5"/>
<line x1="797" y1="480.5" x2="799" y2="480.5"/>
<line x1="797" y1="468.5" x2="799" y2="468.5"/>
<line x1="797" y1="462.5" x2="799" y2="462.5"/>
<line x1="797" y1="456.5" x2="799" y2="456.5"/>
<line x1="797" y1="445.5" x2="799" y2="445.5"/>
<line x1="797" y1="439.5" x2="799" y2="439.5"/>
<line x1="797" y1="433.5" x2="799" y2="433.5"/>
<line x1="797" y1="421.5" x2="799" y2="421.5"/>
<line x1="797" y1="415.5" x2="799" y2="415.5"/>
<line x1="797" y1="409.5" x2="799" y2="409.5"/>
<line x1="797" y1="398.5" x2="799" y2="398.5"/>
<line x1="797" y1="392.5" x2="799" y2="392.5"/>
<line x1="797" y1="386.5" x2="799" y2="386.5"/>
<line x1="797" y1="374.5" x2="799" y2="374.5"/>
<line x1="797" y1="368.5" x2="799" y2="368.5"/>
<line x1="797" y1="363.5" x2="799" y2="363.5"/>
<line x1="797" y1="351.5" x2="799" y2="351.5"/>
<line x1="797" y1="345.5" x2="799" y2="345.5"/>
<line x1="797" y1="339.5" x2="799" y2="339.5"/>
<line x1="797" y1="327.5" x2="799" y2="327.5"/>
<line x1="797" y1="322.5" x2="799" y2="322.5"/>
<line x1="797" y1="316.5" x2="799" y2="316.5"/>
<line x1="797" y1="304.5" x2="799" y2="304.5"/>
<line x1="797" y1="298.5" x2="799" y2="298.5"/>
<line x1="797" y1="292.5" x2="799" y2="292.5"/>
<line x1="797" y1="281.5" x2="799" y2="281.5"/>
<line x1="797" y1="275.5" x2="799" y2="275.5"/>
<line x1="797" y1="269.5" x2="799" y2="269.5"/>
<line x1="797" y1="257.5" x2="799" y2="257.5"/>
<line x1="797" y1="251.5" x2="799" y2="251.5"/>
<line x1="797" y1="245.5" x2="799" y2="245.5"/>
<line x1="391.5" y1="545" x2="391.5" y2="549"/>
<line x1="411.5" y1="545" x2="411.5" y2="549"/>
<line x1="431.5" y1="545" x2="431.5" y2="549"/>
<line x1="452.5" y1="545" x2="452.5" y2="549"/>
<line x1="472.5" y1="545" x2="472.5" y2="549"/>
<line x1="492.5" y1="545" x2="492.5" y2="549"/>
<line x1="512.5" y1="545" x2="512.5" y2="549"/>
<line x1="533.5" y1="545" x2="533.5" y2="549"/>
<line x1="553.5" y1="545" x2="553.5" y2="549"/>
<line x1="573.5" y1="545" x2="573.5" y2="549"/>
<line x1="593.5" y1="545" x2="593.5" y2="549"/>
<line x1="614.5" y1="545" x2="614.5" y2="549"/>
<line x1="634.5" y1="545" x2="634.5" y2="549"/>
<line x1="654.5" y1="545" x2="654.5" y2="549"/>
<line x1="674.5" y1="545" x2="674.5" y2="549"/>
<line x1="695.5" y1="545" x2="695.5" y2="549"/>
<line x1="715.5" y1="545" x2="715.5" y2="549"/>
<line x1="735.5" y1="545" x2="735.5" y2="549"/>
<line x1="756.5" y1="545" x2="756.5" y2="549"/>
<line x1="776.5" y1="545" x2="776.5" y2="549"/>
<line x1="796.5" y1="545" x2="796.5" y2="549"/>
<line x1="396.5" y1="545" x2="396.5" y2="547"/>
<line x1="401.5" y1="545" x2="401.5" y2="547"/>
<line x1="406.5" y1="545" x2="406.5" y2="547"/>
<line x1="416.5" y1="545" x2="416.5" y2="547"/>
<line x1="421.5" y1="545" x2="421.5" y2="547"/>
<line x1="426.5" y1="545" x2="426.5" y2="547"/>
<line x1="436.5" y1="545" x2="436.5" y2="547"/>
<line x1="441.5" y1="545" x2="441.5" y2="547"/>
<line x1="446.5" y1="545" x2="446.5" y2="547"/>
<line x1="457.5" y1="545" x2="457.5" y2="547"/>
<line x1="462.5" y1="545" x2="462.5" y2="547"/>
<line x1="467.5" y1="545" x2="467.5" y2="547"/>
<line x1="477.5" y1="545" x2="477.5" y2="547"/>
<line x1="482.5" y1="545" x2="482.5" y2="547"/>
<line x1="487.5" y1="545" x2="487.5" y2="547"/>
<line x1="497.5" y1="545" x2="497.5" y2="547"/>
<line x1="502.5" y1="545" x2="502.5" y2="547"/>
<line x1="507.5" y1="545" x2="507.5" y2="547"/>
<line x1="517.5" y1="545" x2="517.5" y2="547"/>
<line x1="522.5" y1="545" x2="522.5" y2="547"/>
<line x1="528.5" y1="545" x2="528.5" y2="547"/>
<line x1="538.5" y1="545" x2="538.5" y2="547"/>
<line x1="543.5" y1="545" x2="543.5" y2="547"/>
<line x1="548.5" y1="545" x2="548.5" y2="547"/>
<line x1="558.5" y1="545" x2="558.5" y2="547"/>
<line x1="563.5" y1="545" x2="563.5" y2="547"/>
<line x1="568.5" y1="545" x2="568.5" y2="547"/>
<line x1="578.5" y1="545" x2="578.5" y2="547"/>
<line x1="583.5" y1="545" x2="583.5" y2="547"/>
<line x1="588.5" y1="545" x2="588.5" y2="547"/>
<line x1="598.5" y1="545" x2="598.5" y2="547"/>
<line x1="604.5" y1="545" x2="604.5" y2="547"/>
<line x1="609.5" y1="545" x2="609.5" y2="547"/>
<line x1="619.5" y1="545" x2="619.5" y2="547"/>
<line x1="624.5" y1="545" x2="624.5" y2="547"/>
<line x1="629.5" y1="545" x2="629.5" y2="547"/>
<line x1="639.5" y1="545" x2="639.5" y2="547"/>
<line x1="644.5" y1="545" x2="644.5" y2="547"/>
<line x1="649.5" y1="545" x2="649.5" y2="547"/>
<line x1="659.5" y1="545" x2="659.5" y2="547"/>
<line x1="664.5" y1="545" x2="664.5" y2="547"/>
<line x1="669.5" y1="545" x2="669.5" y2="547"/>
<line x1="680.5" y1="545" x2="680.5" y2="547"/>
<line x1="685.5" y1="545" x2="685.5" y2="547"/>
<line x1="690.5" y1="545" x2="690.5" y2="547"/>
<line x1="700.5" y1="545" x2="700.5" y2="547"/>
<line x1="705.5" y1="545" x2="705.5" y2="547"/>
<line x1="710.5" y1="545" x2="710.5" y2="547"/>
<line x1="720.5" y1="545" x2="720.5" y2="547"/>
<line x1="725.5" y1="545" x2="725.5" y2="547"/>
<line x1="730.5" y1="545" x2="730.5" y2="547"/>
<line x1="740.5" y1="545" x2="740.5" y2="547"/>
<line x1="745.5" y1="545" x2="745.5" y2="547"/>
<line x1="750.5" y1="545" x2="750.5" y2="547"/>
<line x1="761.5" y1="545" x2="761.5" y2="547"/>
<line x1="766.5" y1="545" x2="766.5" y2="547"/>
<line x1="771.5" y1="545" x2="771.5" y2="547"/>
<line x1="781.5" y1="545" x2="781.5" y2="547"/>
<line x1="786.5" y1="545" x2="786.5" y2="547"/>
<line x1="791.5" y1="545" x2="791.5" y2="547"/>
</g>
<defs><clipPath id="plot"><rect x="392" y="240" width="403" height="303"/></clipPath></defs>
<g clip-path="url(#plot)">
<polyline fill="none" stroke="#008000" stroke-width="1.7" points="361.0,267.3 362.5,266.8 364.5,264.5 368.3,257.5 370.5,252.2 373.5,245.2 375.5,241.4 376.6,240.0 380.8,240.0 382.0,241.4 399.1,266.4 400.4,267.1 401.5,267.3 403.0,266.8 405.0,264.5 408.8,257.5 411.0,252.2 414.0,245.2 416.0,241.4 417.1,240.0 421.3,240.0 422.5,241.4 439.6,266.4 440.9,267.1 442.0,267.3 443.5,266.8 445.5,264.5 449.3,257.5 451.5,252.2 454.5,245.2 456.5,241.4 457.6,240.0 461.8,240.0 463.0,241.4 480.2,266.4 481.5,267.1 482.6,267.3 484.1,266.8 486.1,264.5 489.9,257.5 492.1,252.2 495.1,245.2 497.1,241.4 498.2,240.0 502.4,240.0 503.6,241.4 520.7,266.4 522.0,267.1 523.1,267.3 524.6,266.8 526.6,264.5 530.4,257.5 532.6,252.2 535.6,245.2 537.6,241.4 538.7,240.0 542.9,240.0 544.1,241.4 561.3,266.4 562.6,267.1 563.7,267.3 565.2,266.8 567.2,264.5 571.0,257.5 573.2,252.2 576.2,245.2 578.2,241.4 579.3,240.0 583.5,240.0 584.7,241.4 601.8,266.4 603.1,267.1 604.2,267.3 605.7,266.8 607.7,264.5 611.5,257.5 613.7,252.2 616.7,245.2 618.7,241.4 619.8,240.0 624.0,240.0 625.2,241.4 642.3,266.4 643.6,267.1 644.7,267.3 646.2,266.8 648.2,264.5 652.0,257.5 654.2,252.2 657.2,245.2 659.2,241.4 660.3,240.0 664.5,240.0 665.7,241.4 682.9,266.4 684.2,267.1 685.3,267.3 686.8,266.8 688.8,264.5 692.6,257.5 694.8,252.2 697.8,245.2 699.8,241.4 700.9,240.0 705.1,240.0 706.3,241.4 723.4,266.4 724.7,267.1 725.8,267.3 727.3,266.8 729.3,264.5 733.1,257.5 735.3,252.2 738.3,245.2 740.3,241.4 741.4,240.0 745.6,240.0 746.8,241.4 764.0,266.4 765.3,267.1 766.4,267.3 767.9,266.8 769.9,264.5 773.7,257.5 775.9,252.2 778.9,245.2 780.9,241.4 782.0,240.0 786.2,240.0 787.4,241.4 804.5,266.4 805.8,267.1 806.9,267.3 808.4,266.8 810.4,264.5 814.2,257.5 816.4,252.2 819.4,245.2 821.4,241.4 822.5,240.0 826.7,240.0 827.9,241.4 845.0,266.4 846.3,267.1"/>
<polyline fill="none" stroke="#ff0000" stroke-width="1" shape-rendering="crispEdges" points="318.2,543.5 318.6,520.0 319.2,490.0 320.4,440.0 322.1,380.0 323.7,316.0 324.4,303.7 325.2,283.0 326.6,263.6 327.7,249.8 329.4,238.0 331.2,238.0 331.9,249.8 332.9,263.6 334.3,283.0 335.3,303.7 336.0,316.0 338.0,380.0 339.8,440.0 340.9,490.0 341.8,520.0 342.3,543.5"/>
<polyline fill="none" stroke="#ff0000" stroke-width="1" shape-rendering="crispEdges" points="399.3,543.5 399.7,520.0 400.3,490.0 401.5,440.0 403.2,380.0 404.8,316.0 405.5,303.7 406.3,283.0 407.7,263.6 408.8,249.8 410.5,238.0 412.3,238.0 413.0,249.8 414.0,263.6 415.4,283.0 416.4,303.7 417.1,316.0 419.1,380.0 420.9,440.0 422.0,490.0 422.9,520.0 423.4,543.5"/>
<polyline fill="none" stroke="#ff0000" stroke-width="1" shape-rendering="crispEdges" points="480.4,543.5 480.8,520.0 481.4,490.0 482.6,440.0 484.3,380.0 485.9,316.0 486.6,303.7 487.4,283.0 488.8,263.6 489.9,249.8 491.6,238.0 493.4,238.0 494.1,249.8 495.1,263.6 496.5,283.0 497.5,303.7 498.2,316.0 500.2,380.0 502.0,440.0 503.1,490.0 504.0,520.0 504.5,543.5"/>
<polyline fill="none" stroke="#ff0000" stroke-width="1" shape-rendering="crispEdges" points="561.5,543.5 561.9,520.0 562.5,490.0 563.7,440.0 565.4,380.0 567.0,316.0 567.7,303.7 568.5,283.0 569.9,263.6 571.0,249.8 572.7,238.0 574.5,238.0 575.2,249.8 576.2,263.6 577.6,283.0 578.6,303.7 579.3,316.0 581.3,380.0 583.1,440.0 584.2,490.0 585.1,520.0 585.6,543.5"/>
<polyline fill="none" stroke="#ff0000" stroke-width="1" shape-rendering="crispEdges" points="642.5,543.5 642.9,520.0 643.5,490.0 644.7,440.0 646.4,380.0 648.0,316.0 648.7,303.7 649.5,283.0 650.9,263.6 652.0,249.8 653.7,238.0 655.5,238.0 656.2,249.8 657.2,263.6 658.6,283.0 659.6,303.7 660.3,316.0 662.3,380.0 664.1,440.0 665.2,490.0 666.1,520.0 666.6,543.5"/>
<polyline fill="none" stroke="#ff0000" stroke-width="1" shape-rendering="crispEdges" points="723.6,543.5 724.0,520.0 724.6,490.0 725.8,440.0 727.5,380.0 729.1,316.0 729.8,303.7 730.6,283.0 732.0,263.6 733.1,249.8 734.8,238.0 736.6,238.0 737.3,249.8 738.3,263.6 739.7,283.0 740.7,303.7 741.4,316.0 743.4,380.0 745.2,440.0 746.3,490.0 747.2,520.0 747.7,543.5"/>
</g>
<rect x="390" y="239" width="406" height="1" fill="#000" />
<rect x="390" y="239" width="2" height="306" fill="#000" />
<rect x="795" y="239" width="2" height="306" fill="#000" />
<rect x="390" y="543" width="407" height="2" fill="#000" />
<text x="385" y="521.2" font-size="11" text-anchor="end" fill="#000" >120</text>
<text x="385" y="492.2" font-size="11" text-anchor="end" fill="#000" >130</text>
<text x="385" y="464.2" font-size="11" text-anchor="end" fill="#000" >140</text>
<text x="385" y="435.2" font-size="11" text-anchor="end" fill="#000" >150</text>
<text x="385" y="406.2" font-size="11" text-anchor="end" fill="#000" >160</text>
<text x="385" y="377.2" font-size="11" text-anchor="end" fill="#000" >170</text>
<text x="385" y="348.2" font-size="11" text-anchor="end" fill="#000" >180</text>
<text x="385" y="319.2" font-size="11" text-anchor="end" fill="#000" >190</text>
<text x="385" y="290.2" font-size="11" text-anchor="end" fill="#000" >200</text>
<text x="385" y="261.2" font-size="11" text-anchor="end" fill="#000" >210</text>
<text x="802.3" y="548.2" font-size="11" text-anchor="start" fill="#000" >0</text>
<text x="802.3" y="525.2" font-size="11" text-anchor="start" fill="#000" >0,02</text>
<text x="802.3" y="501.2" font-size="11" text-anchor="start" fill="#000" >0,04</text>
<text x="802.3" y="478.2" font-size="11" text-anchor="start" fill="#000" >0,06</text>
<text x="802.3" y="454.2" font-size="11" text-anchor="start" fill="#000" >0,08</text>
<text x="802.3" y="431.2" font-size="11" text-anchor="start" fill="#000" >0,1</text>
<text x="802.3" y="408.2" font-size="11" text-anchor="start" fill="#000" >0,12</text>
<text x="802.3" y="384.2" font-size="11" text-anchor="start" fill="#000" >0,14</text>
<text x="802.3" y="361.2" font-size="11" text-anchor="start" fill="#000" >0,16</text>
<text x="802.3" y="337.2" font-size="11" text-anchor="start" fill="#000" >0,18</text>
<text x="802.3" y="314.2" font-size="11" text-anchor="start" fill="#000" >0,2</text>
<text x="802.3" y="290.2" font-size="11" text-anchor="start" fill="#000" >0,22</text>
<text x="802.3" y="267.2" font-size="11" text-anchor="start" fill="#000" >0,24</text>
<text x="802.3" y="244.2" font-size="11" text-anchor="start" fill="#000" >0,26</text>
<text x="357" y="391" font-size="11" text-anchor="middle" fill="#000" transform="rotate(-90 357 391)" dominant-baseline="central">V</text>
<text x="833" y="391" font-size="11" text-anchor="middle" fill="#000" transform="rotate(90 833 391)" dominant-baseline="central">A</text>
<text x="411.46999999999997" y="560.6" font-size="11" text-anchor="middle" fill="#000" >1,005</text>
<text x="431.74" y="560.6" font-size="11" text-anchor="middle" fill="#000" >1,01</text>
<text x="452.01" y="560.6" font-size="11" text-anchor="middle" fill="#000" >1,015</text>
<text x="472.28" y="560.6" font-size="11" text-anchor="middle" fill="#000" >1,02</text>
<text x="492.54999999999995" y="560.6" font-size="11" text-anchor="middle" fill="#000" >1,025</text>
<text x="512.8199999999999" y="560.6" font-size="11" text-anchor="middle" fill="#000" >1,03</text>
<text x="533.0899999999999" y="560.6" font-size="11" text-anchor="middle" fill="#000" >1,035</text>
<text x="553.36" y="560.6" font-size="11" text-anchor="middle" fill="#000" >1,04</text>
<text x="573.63" y="560.6" font-size="11" text-anchor="middle" fill="#000" >1,045</text>
<text x="593.9" y="560.6" font-size="11" text-anchor="middle" fill="#000" >1,05</text>
<text x="614.17" y="560.6" font-size="11" text-anchor="middle" fill="#000" >1,055</text>
<text x="634.44" y="560.6" font-size="11" text-anchor="middle" fill="#000" >1,06</text>
<text x="654.71" y="560.6" font-size="11" text-anchor="middle" fill="#000" >1,065</text>
<text x="674.98" y="560.6" font-size="11" text-anchor="middle" fill="#000" >1,07</text>
<text x="695.25" y="560.6" font-size="11" text-anchor="middle" fill="#000" >1,075</text>
<text x="715.52" y="560.6" font-size="11" text-anchor="middle" fill="#000" >1,08</text>
<text x="735.79" y="560.6" font-size="11" text-anchor="middle" fill="#000" >1,085</text>
<text x="756.06" y="560.6" font-size="11" text-anchor="middle" fill="#000" >1,09</text>
<text x="776.3299999999999" y="560.6" font-size="11" text-anchor="middle" fill="#000" >1,095</text>
<rect x="846" y="230" width="26" height="25" fill="#696969" />
<rect x="846" y="230" width="25" height="24" fill="#ffffff" />
<rect x="847" y="231" width="24" height="23" fill="#a0a0a0" />
<rect x="847" y="231" width="23" height="22" fill="#f0f0f0" />
<rect x="872" y="230" width="26" height="25" fill="#696969" />
<rect x="872" y="230" width="25" height="24" fill="#ffffff" />
<rect x="873" y="231" width="24" height="23" fill="#a0a0a0" />
<rect x="873" y="231" width="23" height="22" fill="#f0f0f0" />
<rect x="898" y="230" width="26" height="25" fill="#696969" />
<rect x="898" y="230" width="25" height="24" fill="#ffffff" />
<rect x="899" y="231" width="24" height="23" fill="#a0a0a0" />
<rect x="899" y="231" width="23" height="22" fill="#f0f0f0" />
<line x1="860.5" y1="244" x2="866.5" y2="250.5" stroke="#000080" stroke-width="2.2"/>
<polygon points="862.0,242.3 858.8,245.5 854.2,245.5 851.0,242.3 851.0,237.7 854.2,234.5 858.8,234.5 862.0,237.7" fill="url(#cyan)" stroke="#000" stroke-width="1.1"/>
<path d="M852.9,247.3 L860.1,247.3 L856.5,251.2 Z" fill="#000"/>
<line x1="886.5" y1="244" x2="892.5" y2="250.5" stroke="#000080" stroke-width="2.2"/>
<polygon points="888.0,242.3 884.8,245.5 880.2,245.5 877.0,242.3 877.0,237.7 880.2,234.5 884.8,234.5 888.0,237.7" fill="url(#cyan)" stroke="#000" stroke-width="1.1"/>
<path d="M878.9,251.2 L886.1,251.2 L882.5,247.3 Z" fill="#000"/>
<line x1="912.5" y1="244" x2="918.5" y2="250.5" stroke="#000080" stroke-width="2.2"/>
<polygon points="914.0,242.3 910.8,245.5 906.2,245.5 903.0,242.3 903.0,237.7 906.2,234.5 910.8,234.5 914.0,237.7" fill="url(#cyan)" stroke="#000" stroke-width="1.1"/>
<path d="M907,239 L914.5,246.5 M914.5,239 L907,246.5" stroke="#ff0000" stroke-width="2.2"/>
<rect x="859.7" y="265.7" width="45.5" height="45.3" fill="#000" />
<rect x="856" y="262" width="46" height="46" fill="#000" />
<rect x="857" y="263" width="44" height="44" fill="#ffffff" />
<rect x="861" y="271" width="5" height="1" fill="#ff0000" />
<text x="870.3" y="275.29999999999995" font-size="11" text-anchor="start" fill="#000" >I(D1)</text>
<rect x="861" y="285" width="5" height="1" fill="#008000" />
<text x="870.3" y="289.29999999999995" font-size="11" text-anchor="start" fill="#000" >V(C1)</text>
<rect x="861" y="299" width="5" height="1" fill="#ffff00" />
<text x="870.3" y="303.29999999999995" font-size="11" text-anchor="start" fill="#000" >V(C2)</text></svg></body></html>
